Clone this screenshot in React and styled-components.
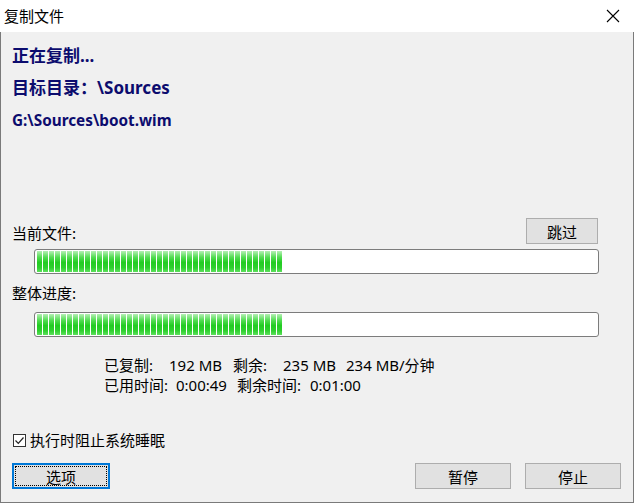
import React from "react";
import styled, { createGlobalStyle } from "styled-components";

const Global = createGlobalStyle`
  html, body { margin: 0; padding: 0; background: #f0f0f0; }
  body { font-family: "Noto Sans", "Noto Sans CJK SC", sans-serif; }
`;

const Window = styled.div`
  width: 634px;
  height: 503px;
  display: flex;
  flex-direction: column;
  background: #f0f0f0;
  box-sizing: border-box;
  overflow: hidden;
`;

const TitleBar = styled.div`
  height: 32px;
  flex: none;
  background: #ffffff;
  display: flex;
  align-items: center;
  justify-content: space-between;
  padding: 0 14px 0 4px;
  box-sizing: border-box;
`;

const Title = styled.span`
  font-family: "Noto Sans CJK SC", sans-serif;
  font-size: 15px;
  line-height: 20px;
  color: #000;
`;

const CloseIcon = styled.svg`
  width: 14px;
  height: 14px;
  display: block;
`;

const Body = styled.div`
  flex: 1;
  display: flex;
  flex-direction: column;
  border: 1px solid #7a7a7a;
  border-top: none;
  padding: 0 11px;
  box-sizing: border-box;
`;

const Heading = styled.div`
  font-family: "Noto Sans", "Noto Sans CJK SC", sans-serif;
  font-weight: 700;
  color: #0c0c6e;
  font-size: ${(p) => p.$size}px;
  line-height: 24px;
  margin-top: ${(p) => p.$mt}px;
  white-space: pre;
`;

const Label = styled.div`
  font-family: "Noto Sans CJK SC", sans-serif;
  font-size: 15px;
  line-height: 20px;
  color: #000;
  margin-top: ${(p) => p.$mt || 0}px;
  padding-bottom: ${(p) => p.$pb || 0}px;
`;

const FileRow = styled.div`
  display: flex;
  justify-content: space-between;
  align-items: flex-end;
  margin-top: ${(p) => p.$mt}px;
  padding-right: 24px;
`;

const Button = styled.button`
  width: ${(p) => p.$w}px;
  height: 26px;
  box-sizing: border-box;
  background: #e1e1e1;
  border: 1px solid #adadad;
  font-family: "Noto Sans CJK SC", sans-serif;
  font-size: 15px;
  color: #000;
  padding: 0;
  margin: 0;
  display: flex;
  align-items: center;
  justify-content: center;
  ${(p) =>
    p.$focused &&
    `
    border: 2px solid #0078d7;
    outline: 1px dotted #000;
    outline-offset: -4px;
  `}
`;

const Bar = styled.div`
  margin-top: ${(p) => p.$mt}px;
  margin-left: 22px;
  width: 565px;
  height: 25px;
  box-sizing: border-box;
  border: 1px solid #7c7c7c;
  border-radius: 3px;
  background: #ffffff;
  padding: 1px 2px;
  display: flex;
`;

const Fill = styled.div`
  height: 100%;
  background:
    repeating-linear-gradient(to right, transparent 0 5px, #ffffff 5px 6px),
    linear-gradient(to bottom, #b5f0b5 0%, #52dc52 30%, #22cc22 55%, #2fd02f 80%, #5ee05e 100%);
`;

const Stats = styled.div`
  margin-top: ${(p) => p.$mt}px;
  padding-left: 92px;
  display: flex;
  flex-direction: column;
`;

const StatLine = styled.div`
  display: flex;
  font-family: "Noto Sans", "Noto Sans CJK SC", sans-serif;
  font-size: 15px;
  line-height: 20px;
  color: #000;
  white-space: pre;
`;

const Cell = styled.span`
  width: ${(p) => (p.$w ? `${p.$w}px` : "auto")};
  flex: none;
`;

const CheckRow = styled.label`
  display: flex;
  align-items: center;
  gap: 4px;
  margin-top: ${(p) => p.$mt}px;
  padding-left: 1px;
  font-family: "Noto Sans CJK SC", sans-serif;
  font-size: 15px;
  line-height: 20px;
  color: #000;
`;

const Box = styled.span`
  width: 13px;
  height: 13px;
  box-sizing: border-box;
  border: 1px solid #333;
  background: #fff;
  display: flex;
  align-items: center;
  justify-content: center;
`;

const Footer = styled.div`
  display: flex;
  align-items: center;
  margin-top: ${(p) => p.$mt}px;
  padding-right: 1px;
`;

const Spacer = styled.div`
  flex: 1;
`;

const RightButtons = styled.div`
  display: flex;
  gap: 14px;
`;

const stats = [
  [
    ["已复制:", 65],
    ["192 MB", 64],
    ["剩余:", 50],
    ["235 MB", 63],
    ["234 MB/分钟", 0],
  ],
  [
    ["已用时间:", 72],
    ["0:00:49", 61],
    ["剩余时间:", 73],
    ["0:01:00", 0],
  ],
];

const progress = { file: 0.438, total: 0.438 };

export default function App() {
  return (
    <>
      <Global />
      <Window>
        <TitleBar>
          <Title>复制文件</Title>
          <CloseIcon viewBox="0 0 14 14">
            <path d="M1 1 L13 13 M13 1 L1 13" stroke="#000" strokeWidth="1.1" fill="none" />
          </CloseIcon>
        </TitleBar>
        <Body>
          <Heading $size={17} $mt={12}>正在复制...</Heading>
          <Heading $size={17} $mt={8}>目标目录：\Sources</Heading>
          <Heading $size={15.3} $mt={8}>G:\Sources\boot.wim</Heading>
          <FileRow $mt={86}>
            <Label $pb={1}>当前文件:</Label>
            <Button $w={72}>跳过</Button>
          </FileRow>
          <Bar $mt={5}>
            <Fill style={{ width: `${progress.file * 100}%` }} />
          </Bar>
          <Label $mt={9}>整体进度:</Label>
          <Bar $mt={9}>
            <Fill style={{ width: `${progress.total * 100}%` }} />
          </Bar>
          <Stats $mt={18}>
            {stats.map((line, i) => (
              <StatLine key={i}>
                {line.map(([t, w], j) => (
                  <Cell key={j} $w={w}>{t}</Cell>
                ))}
              </StatLine>
            ))}
          </Stats>
          <CheckRow $mt={35}>
            <Box>
              <svg width="11" height="11" viewBox="0 0 11 11">
                <path d="M1.5 5.5 L4.3 8.3 L9.5 2.5" stroke="#222" strokeWidth="1.2" fill="none" />
              </svg>
            </Box>
            执行时阻止系统睡眠
          </CheckRow>
          <Footer $mt={13}>
            <Button $w={98} $focused>选项</Button>
            <Spacer />
            <RightButtons>
              <Button $w={96}>暂停</Button>
              <Button $w={96}>停止</Button>
            </RightButtons>
          </Footer>
        </Body>
      </Window>
    </>
  );
}
